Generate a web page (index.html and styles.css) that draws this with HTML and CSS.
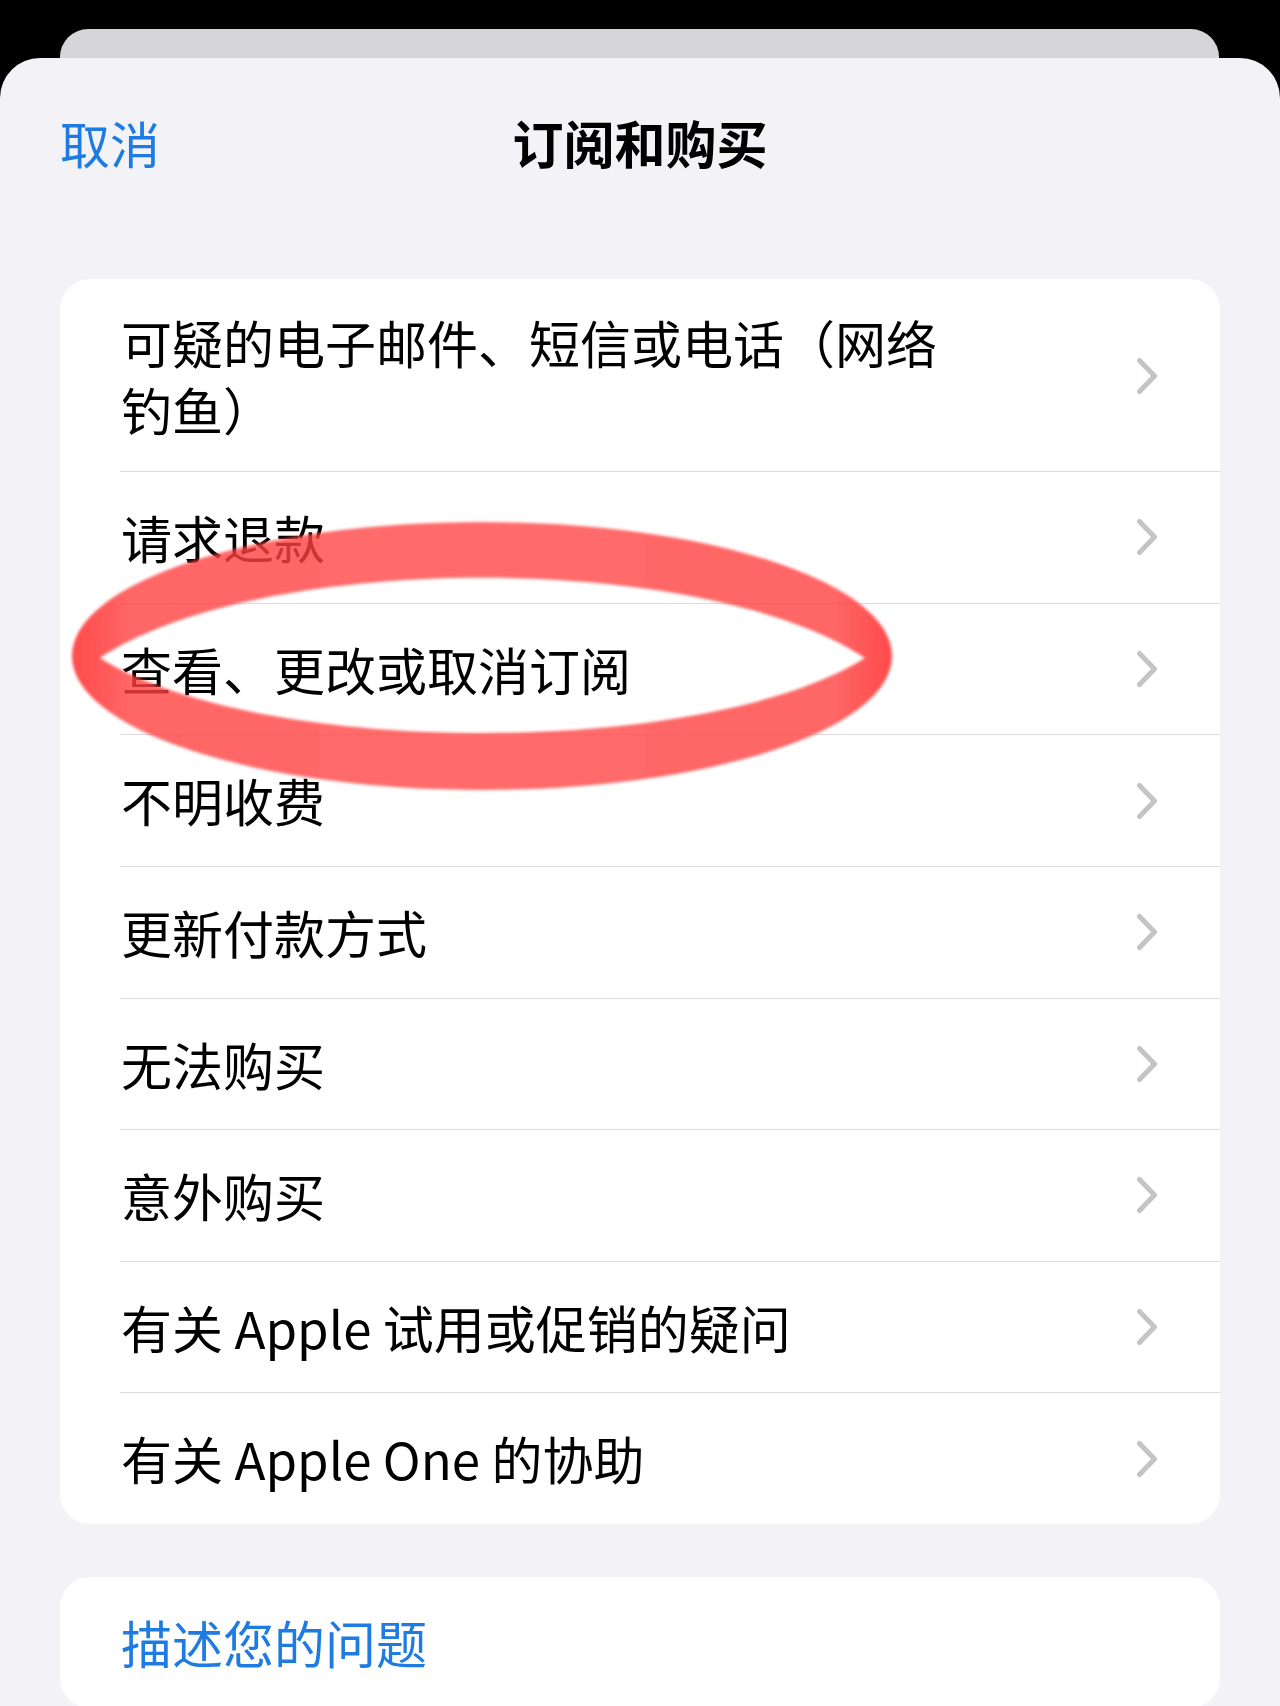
FILE: index.html
```html
<!DOCTYPE html>
<html lang="zh-CN">
<head>
  <meta charset="UTF-8" />
  <meta name="viewport" content="width=device-width, initial-scale=1.0"/>
  <title>订阅和购买</title>
  <link rel="stylesheet" href="styles.css">
</head>
<body>
  <div class="back-card"></div>

  <div class="sheet">
    <header class="nav">
      <span class="nav-cancel">取消</span>
      <h1 class="nav-title">订阅和购买</h1>
      <span></span>
    </header>

    <section class="group topics">
      <ul>
        <li class="row row-tall">
          <div class="row-inner">
            <span class="label label-wrap">可疑的电子邮件、短信或电话（网络钓鱼）</span>
            <svg class="chevron" viewBox="0 0 22 38"><polyline points="3.5,3.5 18.5,19 3.5,34.5"/></svg>
          </div>
        </li>
        <li class="row">
          <div class="row-inner">
            <span class="label">请求退款</span>
            <svg class="chevron" viewBox="0 0 22 38"><polyline points="3.5,3.5 18.5,19 3.5,34.5"/></svg>
          </div>
        </li>
        <li class="row">
          <div class="row-inner">
            <span class="label">查看、更改或取消订阅</span>
            <svg class="chevron" viewBox="0 0 22 38"><polyline points="3.5,3.5 18.5,19 3.5,34.5"/></svg>
          </div>
        </li>
        <li class="row">
          <div class="row-inner">
            <span class="label">不明收费</span>
            <svg class="chevron" viewBox="0 0 22 38"><polyline points="3.5,3.5 18.5,19 3.5,34.5"/></svg>
          </div>
        </li>
        <li class="row">
          <div class="row-inner">
            <span class="label">更新付款方式</span>
            <svg class="chevron" viewBox="0 0 22 38"><polyline points="3.5,3.5 18.5,19 3.5,34.5"/></svg>
          </div>
        </li>
        <li class="row">
          <div class="row-inner">
            <span class="label">无法购买</span>
            <svg class="chevron" viewBox="0 0 22 38"><polyline points="3.5,3.5 18.5,19 3.5,34.5"/></svg>
          </div>
        </li>
        <li class="row">
          <div class="row-inner">
            <span class="label">意外购买</span>
            <svg class="chevron" viewBox="0 0 22 38"><polyline points="3.5,3.5 18.5,19 3.5,34.5"/></svg>
          </div>
        </li>
        <li class="row">
          <div class="row-inner">
            <span class="label">有关 Apple 试用或促销的疑问</span>
            <svg class="chevron" viewBox="0 0 22 38"><polyline points="3.5,3.5 18.5,19 3.5,34.5"/></svg>
          </div>
        </li>
        <li class="row">
          <div class="row-inner last">
            <span class="label">有关 Apple One 的协助</span>
            <svg class="chevron" viewBox="0 0 22 38"><polyline points="3.5,3.5 18.5,19 3.5,34.5"/></svg>
          </div>
        </li>
      </ul>

      <!-- hand-drawn marker ring over the subscriptions row -->
      <svg class="ring" viewBox="0 0 1160 1246">
        <defs>
          <filter id="soft"><feGaussianBlur stdDeviation="1.6"/></filter>
          <linearGradient id="ink" gradientUnits="userSpaceOnUse" x1="12" y1="0" x2="832" y2="0">
            <stop offset="0" stop-color="#ff1e1e"/>
            <stop offset="0.07" stop-color="#ff4040"/>
            <stop offset="0.5" stop-color="#ff4646"/>
            <stop offset="0.93" stop-color="#ff4040"/>
            <stop offset="1" stop-color="#ff1e1e"/>
          </linearGradient>
        </defs>
        <path filter="url(#soft)" fill-rule="evenodd"
              d="M12,377 A410,134 0 1,0 832,377 A410,134 0 1,0 12,377 Z
                 M40,379 C200,272 645,272 805,379 C645,479 200,479 40,379 Z"/>
      </svg>
    </section>

    <section class="group">
      <ul>
        <li class="row">
          <div class="row-inner last">
            <span class="label link">描述您的问题</span>
          </div>
        </li>
      </ul>
    </section>
  </div>
</body>
</html>
```

FILE: styles.css
```css
:root {
  --black: #000000;
  --sheet: #f2f2f7;
  --back-card: #d5d5da;
  --card: #ffffff;
  --text: #000000;
  --blue: #1d7be2;
  --separator: #dcdcdf;
  --chevron: #c4c4c7;
}

html, body {
  margin: 0;
  height: 1706px;
  overflow: hidden;
}

body {
  background: var(--black);
  font-family: "Noto Sans CJK SC", "Noto Sans", sans-serif;
  color: var(--text);
  padding-top: 29px;
  box-sizing: border-box;
}

.back-card {
  height: 29px;
  margin: 0 61px 0 60px;
  background: var(--back-card);
  border-radius: 28px 28px 0 0;
}

.sheet {
  background: var(--sheet);
  border-radius: 40px 40px 0 0;
  height: 1648px;
  padding: 0 60px;
}

.nav {
  display: grid;
  grid-template-columns: 1fr auto 1fr;
  align-items: center;
  height: 168px;
  margin: 0 -60px;
}

.nav-cancel {
  padding-left: 60px;
  font-size: 50px;
  color: var(--blue);
}

.nav-title {
  margin: 0;
  font-size: 51px;
  font-weight: 700;
}

.group {
  position: relative;
  background: var(--card);
  border-radius: 30px;
  margin-top: 53px;
}

.group ul {
  list-style: none;
  margin: 0;
  padding: 0;
}

.row {
  padding-left: 60px;
}

.row-inner {
  display: flex;
  align-items: center;
  justify-content: space-between;
  padding: 32px 62px 32px 0;
  border-bottom: 1px solid var(--separator);
}

.row-inner.last {
  border-bottom: none;
}

.row-tall .row-inner {
  padding-top: 30px;
  padding-bottom: 29px;
}

.label {
  font-size: 51px;
  line-height: 66.6px;
  padding-left: 1px;
}

.label-wrap {
  max-width: 850px;
}

.link {
  color: var(--blue);
}

.chevron {
  width: 22px;
  height: 38px;
  flex-shrink: 0;
}

.chevron polyline {
  fill: none;
  stroke: var(--chevron);
  stroke-width: 5;
  stroke-linecap: round;
  stroke-linejoin: round;
}

.ring {
  position: absolute;
  left: 0;
  top: 0;
  width: 1160px;
  height: 1246px;
  overflow: visible;
  pointer-events: none;
}

.ring path {
  fill: url(#ink);
  opacity: 0.8;
}
```
